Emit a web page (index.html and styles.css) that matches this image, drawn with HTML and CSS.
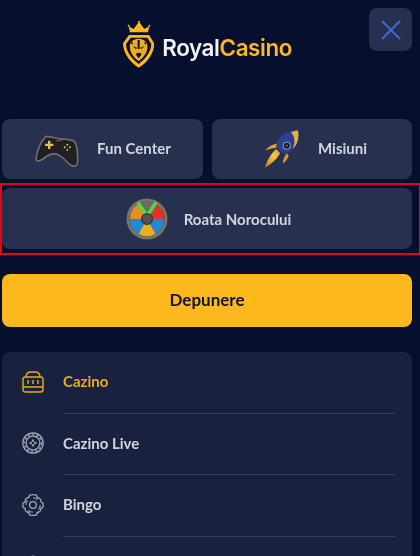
FILE: index.html
```html
<!DOCTYPE html>
<html lang="ro">
<head>
<meta charset="utf-8">
<title>RoyalCasino</title>
<link rel="stylesheet" href="styles.css">
</head>
<body>
<div class="page">
  <header class="top">
    <a class="logo">
      <svg class="logo-mark" viewBox="24 18 94 140" width="31.300" height="46.700">
        <path d="M45 52 L41 34 L56 42 L72 20 L88 42 L103 34 L99 52 Z" fill="#fdb81e"/>
        <circle cx="41" cy="32" r="3" fill="#fdb81e"/><circle cx="72" cy="19" r="3.500" fill="#fdb81e"/><circle cx="103" cy="32" r="3" fill="#fdb81e"/>
        <path d="M42 60 L102 60 L118 85 C118 115 95 145 71 158 C47 145 24 115 24 85 Z" fill="#fdb81e"/>
        <path d="M47 68 L97 68 L109 87 C109 110 90 133 71 147 C52 133 33 110 33 87 Z" fill="#0a1130"/>
        <path d="M71 71 C90 72 100 84 97 100 C95 116 85 128 71 139 C57 128 47 116 45 100 C42 84 52 72 71 71 Z" fill="#f2ae1a"/>
        <path d="M53 93 L66 98 L63 103 Z M89 93 L76 98 L79 103 Z M62 118 L71 110 L80 118 L71 130 Z M68 75 H74 V102 H68 Z M47 84 L54 80 L52 89 Z M95 84 L88 80 L90 89 Z" fill="#0a1130"/>
        <path d="M65 108 H77 L71 115 Z" fill="#f2ae1a"/>
      </svg>
      <span class="logo-text"><span class="logo-royal">Royal</span><span class="logo-casino">Casino</span></span>
    </a>
    <button class="close" aria-label="Închide">
      <svg viewBox="0 0 20 20" width="20" height="20"><path d="M1 1 L19 19 M19 1 L1 19" stroke="#3f69d8" stroke-width="2" fill="none"/></svg>
    </button>
  </header>

  <section class="tiles">
    <div class="tile tile-fun">
      <svg class="ico-pad" viewBox="30 33 132 102" width="44" height="34">
        <path d="M62 38 C75 36 88 42 100 44 C115 46 135 45 148 52 C156 60 158 90 158 112 C158 125 148 130 138 124 C125 116 118 100 100 92 C85 86 70 92 58 102 C48 110 35 115 33 105 C35 85 45 55 62 38 Z" fill="#1f1f24" stroke="#6f6e70" stroke-width="5"/>
        <path d="M69 50 H76 V59 H85 V66 H76 V75 H69 V66 H60 V59 H69 Z" fill="#e6c04a"/>
        <circle cx="127" cy="62" r="3" fill="#d8bc4a"/><circle cx="127" cy="78" r="3" fill="#d8bc4a"/><circle cx="119" cy="70" r="3" fill="#d8bc4a"/><circle cx="135" cy="70" r="3" fill="#d8bc4a"/>
        <path d="M93 50 H110" stroke="#55555a" stroke-width="4"/>
      </svg>
      <span class="tile-label">Fun Center</span>
    </div>
    <div class="tile tile-mission">
      <svg class="ico-rocket" viewBox="20 12 112 120" width="37" height="40">
        <defs>
          <linearGradient id="flame" x1="0" y1="1" x2="1" y2="0">
            <stop offset="0" stop-color="#c9781a"/>
            <stop offset=".6" stop-color="#f7c64a"/>
            <stop offset="1" stop-color="#e89a20"/>
          </linearGradient>
        </defs>
        <path d="M26 128 C32 105 45 85 60 72 L72 85 C60 105 45 118 26 128 Z" fill="url(#flame)"/>
        <path d="M27 76 C35 65 48 58 62 55 L60 68 C50 70 38 72 27 76 Z" fill="#e0a030"/>
        <path d="M80 116 C80 105 84 95 92 85 L98 92 C96 100 90 110 80 116 Z" fill="#d99525"/>
        <path d="M126 16 C130 35 125 60 108 75 C100 82 88 88 80 85 L62 68 C60 50 70 35 85 25 C97 18 112 15 126 16 Z" fill="#2c3f96"/>
        <path d="M126 16 C130 35 125 60 110 72 C118 55 118 35 105 22 C112 18 118 16 126 16 Z" fill="#e7b23c"/>
        <circle cx="92" cy="62" r="11" fill="#15151d" stroke="#a7aabb" stroke-width="3"/>
        <circle cx="92" cy="62" r="3.500" fill="#6a6d80"/>
      </svg>
      <span class="tile-label">Misiuni</span>
    </div>
    <div class="wheel-frame">
      <div class="tile tile-wheel">
        <svg class="ico-wheel" viewBox="0 0 42 42" width="42" height="42">
          <circle cx="21" cy="21" r="20.500" fill="#77746a"/>
          <circle cx="21" cy="21" r="17.500" fill="#4e4c4a"/>
          <path d="M21 21 L12.500 6 A17 17 0 0 0 4 21 Z" fill="#e8901f"/>
          <path d="M21 21 L29.500 6 A17 17 0 0 1 38 21 Z" fill="#df3527"/>
          <path d="M21 21 H4 A17 17 0 0 0 12.500 36 Z" fill="#1f8bd6"/>
          <path d="M21 21 H38 A17 17 0 0 1 29.500 36 Z" fill="#1f8bd6"/>
          <path d="M21 21 L12.500 36 A17 17 0 0 0 29.500 36 Z" fill="#ecb01c"/>
          <path d="M21 21 L12.500 6 A17 17 0 0 1 29.500 6 Z" fill="#6b6a66"/>
          <path d="M12 4.500 L21 18 L30 4.500" fill="none" stroke="#45dc45" stroke-width="3.600"/>
          <circle cx="21" cy="21" r="5.400" fill="#55534f" stroke="#35343a" stroke-width="1.400"/>
        </svg>
        <span class="tile-label tile-label-wheel">Roata Norocului</span>
      </div>
    </div>
  </section>

  <button class="deposit">Depunere</button>

  <nav class="menu">
    <a class="menu-row is-active">
      <svg class="menu-ico" viewBox="0 0 22 22" width="22" height="22" fill="none" stroke="currentColor" stroke-width="1.400">
        <path d="M4 6 C4 3 6 1 9 1 H13 C16 1 18 3 18 6"/>
        <rect x="1" y="6" width="20" height="15" rx="2.500"/>
        <path d="M1 16 H21 M6 9 V13 M11 9 V13 M16 9 V13"/>
      </svg>
      <span class="menu-label">Cazino</span>
    </a>
    <a class="menu-row">
      <svg class="menu-ico" viewBox="0 0 22 22" width="22" height="22" fill="none" stroke="currentColor">
        <circle cx="11" cy="11" r="10.200" stroke-width="1.200"/>
        <circle cx="11" cy="11" r="6.800" stroke-width="1.200"/>
        <circle cx="11" cy="11" r="8.500" stroke-width="2" stroke-dasharray="2.500 1.800" opacity=".75"/>
        <path d="M11 7.500 L12 10 L14.500 11 L12 12 L11 14.500 L10 12 L7.500 11 L10 10 Z" stroke-width="1"/>
      </svg>
      <span class="menu-label">Cazino Live</span>
    </a>
    <a class="menu-row">
      <svg class="menu-ico" viewBox="0 0 22 22" width="22" height="22" fill="none" stroke="currentColor" stroke-width="1.300">
        <circle cx="11" cy="11" r="3.400"/>
        <path d="M7.500 1.200 C9.800 .5 12.200 .5 14.500 1.200 C14.500 2.800 15.500 3.800 17 4 C17.900 4.600 18.300 5 18.800 6 C18.400 7.500 19 8.500 20.800 8.800 C21.300 10.500 21.300 12 20.800 13.500 C19 13.800 18.400 14.800 18.800 16 C18.300 17 17.900 17.400 17 18 C15.500 18.200 14.500 19.200 14.500 20.800 C12.200 21.500 9.800 21.500 7.500 20.800 C7.500 19.200 6.500 18.200 5 18 C4.100 17.400 3.700 17 3.200 16 C3.600 14.800 3 13.800 1.200 13.500 C.7 12 .7 10.500 1.200 8.800 C3 8.500 3.600 7.500 3.200 6 C3.700 5 4.100 4.600 5 4 C6.500 3.800 7.500 2.800 7.500 1.200 Z"/>
        <circle cx="11" cy="11" r="7.200" stroke-dasharray="5 6.300" opacity=".8"/>
      </svg>
      <span class="menu-label">Bingo</span>
    </a>
    <a class="menu-row menu-row-last">
      <svg class="menu-ico" viewBox="0 0 22 22" width="22" height="22" fill="none" stroke="currentColor" stroke-width="1.200">
        <circle cx="11" cy="11" r="10"/>
      </svg>
    </a>
  </nav>
</div>
</body>
</html>
```
FILE: styles.css
```css
* { box-sizing: border-box; }
html, body {
  margin: 0;
  height: 556px;
  overflow: hidden;
  background: #060f2d;
}
body {
  font-family: Lato, "Open Sans", sans-serif;
  color: #d5d7e0;
}
.page {
  padding: 8px 8px 0 2px;
  filter: blur(0.35px);
}
.top {
  height: 111px;
  display: flex;
  justify-content: flex-end;
  align-items: flex-start;
  position: relative;
}
.logo {
  position: absolute;
  left: 121px;
  top: 13px;
  display: flex;
  align-items: center;
  gap: 8px;
}
.logo-mark { display: block; }
.logo-text {
  font-family: Inter, sans-serif;
  font-size: 22.400px;
  font-weight: 600;
  letter-spacing: -0.4px;
  margin-top: 7px;
}
.logo-royal { color: #f2f2f2; }
.logo-casino { color: #fdb81e; }
.close {
  width: 43px;
  height: 43px;
  padding: 0;
  border: 0;
  border-radius: 8px;
  background: #28304f;
  display: flex;
  align-items: center;
  justify-content: center;
}
.tiles {
  display: grid;
  grid-template-columns: 201px 200px;
  column-gap: 9px;
  row-gap: 4px;
}
.tile {
  height: 60px;
  border-radius: 8px;
  background: #28304f;
  display: flex;
  align-items: center;
}
.tile-label {
  font-size: 15px;
  font-weight: 700;
  color: #d2d4de;
  padding-bottom: 3px;
}
.tile-label-wheel { padding-bottom: 0; }
.tile-fun { padding-left: 33px; gap: 18px; }
.tile-mission { padding-left: 51px; gap: 18px; }
.ico-pad { margin-top: 6px; }
.wheel-frame {
  grid-column: 1 / -1;
  margin: 0 -8px 0 -2px;
  border: 2px solid #e30613;
  border-right-width: 1px;
  height: 72px;
  padding: 3px 7px 0 0;
}
.tile-wheel {
  height: 61px;
  justify-content: center;
  gap: 16px;
  padding-left: 3px;
}
.ico-pad, .ico-rocket, .ico-wheel { display: block; flex: none; }
.deposit {
  display: block;
  width: 410px;
  height: 53px;
  margin-top: 19px;
  padding: 0 0 3px;
  border: 0;
  border-radius: 8px;
  background: #fdb81e;
  color: #10152c;
  font-family: Lato, sans-serif;
  font-size: 17px;
  font-weight: 700;
}
.menu {
  margin-top: 25px;
  background: #18223f;
  border-radius: 8px;
  padding: 0 17px 0 20px;
}
.menu-row {
  height: 61.500px;
  padding-bottom: 2px;
  display: flex;
  align-items: center;
  gap: 19px;
  color: #a3a8b8;
  position: relative;
}
.menu-row::after {
  content: "";
  position: absolute;
  left: 41px;
  right: 0;
  bottom: 0;
  height: 1px;
  background: #353d58;
}
.menu-row-last::after { display: none; }
.menu-ico { display: block; flex: none; }
.menu-label {
  font-size: 15px;
  font-weight: 700;
  color: #d2d4de;
  padding-bottom: 1px;
}
.is-active { color: #e8ab1e; }
.is-active .menu-label { color: #e8ab1e; }
```
